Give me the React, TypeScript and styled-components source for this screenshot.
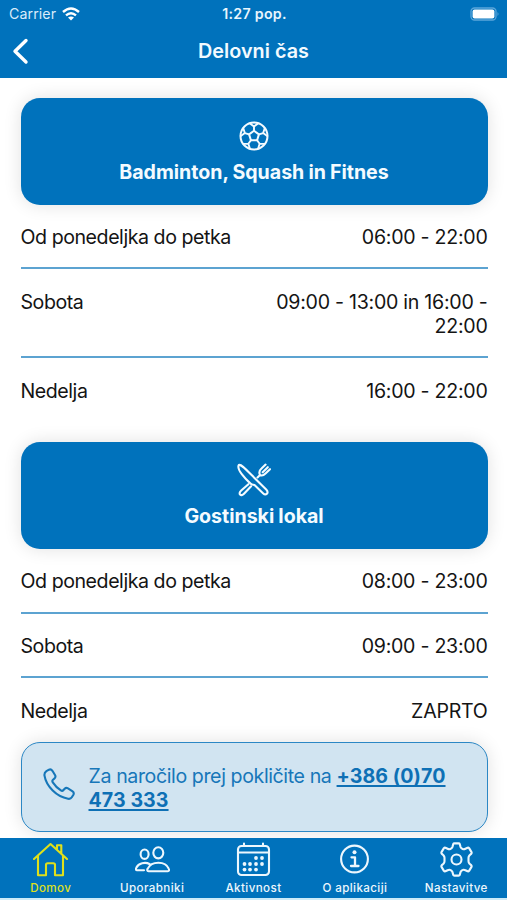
import React from "react";
import styled, { createGlobalStyle } from "styled-components";

const BLUE = "#0072bc";

const Global = createGlobalStyle`
  * { box-sizing: border-box; }
  body { margin: 0; background: #fff; font-family: Inter, "Liberation Sans", sans-serif; }
`;

const Screen = styled.div`
  width: 507px;
  height: 900px;
  overflow: hidden;
  display: flex;
  flex-direction: column;
  background: #fff;
  border-bottom: 2px solid #cdebf8;
`;

const Header = styled.header`
  flex: none;
  height: 77.5px;
  background: ${BLUE};
  color: #fff;
`;

const StatusBar = styled.div`
  height: 27px;
  padding: 0 7px 0 9px;
  display: grid;
  grid-template-columns: 1fr auto 1fr;
  align-items: center;
`;

const Carrier = styled.div`
  display: flex;
  align-items: center;
  gap: 6px;
  font-size: 14.2px;
  letter-spacing: 0.08px;
  color: #d9ecfa;
`;

const Clock = styled.div`
  font-size: 14.2px;
  font-weight: 600;
  letter-spacing: 0.3px;
  color: #e9f5fd;
`;

const Battery = styled.svg`
  justify-self: end;
`;

const TitleBar = styled.div`
  height: 48px;
  padding: 0 12px;
  display: grid;
  grid-template-columns: 1fr auto 1fr;
  align-items: center;
`;

const Title = styled.h1`
  margin: 0;
  font-size: 19.8px;
  font-weight: 600;
  letter-spacing: 0.02px;
  color: #f2faff;
`;

const Content = styled.main`
  flex: none;
  height: 760px;
  padding: 20px 19.5px 0 20.5px;
`;

const Section = styled.section`
  margin-bottom: 20.9px;

  &:last-of-type { margin-bottom: 0; }
`;

const Card = styled.div`
  height: 107px;
  padding-top: 21.5px;
  border-radius: 19px;
  background: ${BLUE};
  color: #f4fbff;
  box-shadow: 0 0 18px rgba(0, 0, 0, 0.12);
  display: flex;
  flex-direction: column;
  align-items: center;
`;

const CardTitle = styled.h2`
  margin: 7px 0 0;
  font-size: 19.6px;
  line-height: 24px;
  font-weight: 700;
  letter-spacing: -0.02px;
  word-spacing: -0.5px;
`;

const Row = styled.div`
  display: flex;
  justify-content: space-between;
  padding: 20.5px 0 17.7px;
  border-bottom: 2px solid #5ca3d1;
  font-size: 19.6px;
  line-height: 24.5px;
  color: #141414;

  &:last-child { border-bottom: 0; }
`;

const Day = styled.span`
  letter-spacing: -0.45px;
`;

const Hours = styled.span`
  width: 230px;
  text-align: right;
  letter-spacing: -0.27px;
`;

const Notice = styled.aside`
  height: 90.5px;
  margin-top: 0.9px;
  padding: 2px 0 0 21px;
  border: 1.5px solid #2b87c5;
  border-radius: 19px;
  background: #d1e4f1;
  color: #1777b9;
  box-shadow: 0 0 18px rgba(0, 0, 0, 0.12);
  display: flex;
  align-items: center;
  gap: 13px;
  font-size: 19.6px;
  line-height: 24.5px;
  letter-spacing: -0.4px;
`;

const NoticeText = styled.p`
  margin: 0;
  width: 370px;
`;

const Phone = styled.a`
  color: #0e70b5;
  font-weight: 700;
  letter-spacing: 0.07px;
  text-decoration: underline;
  text-decoration-thickness: 1.5px;
  text-underline-offset: 2px;
  text-decoration-skip-ink: none;
`;

const TabBar = styled.nav`
  flex: 1;
  display: grid;
  grid-template-columns: repeat(5, 1fr);
  background: ${BLUE};
`;

const Tab = styled.div<{ $active?: boolean }>`
  padding-top: 4px;
  display: flex;
  flex-direction: column;
  align-items: center;
  font-size: 11.6px;
  line-height: 16px;
  font-weight: 500;
  letter-spacing: 0.4px;
  color: ${(p) => (p.$active ? "#dfe01b" : "#edf7fd")};
`;

const TabLabel = styled.span`
  margin-top: 3px;
  white-space: nowrap;
`;

const Line = styled.svg`
  display: block;
  flex: none;
  fill: none;
  stroke: currentColor;
  stroke-width: 2.1;
  stroke-linecap: round;
  stroke-linejoin: round;
`;

const CallIcon = styled(Line)`
  margin-bottom: 7px;
`;

const Wifi = () => (
  <svg width="18" height="14" viewBox="0 0 18 14" fill="none" stroke="#fff" strokeWidth="2.4">
    <path d="M1 5Q9 -2 17 5" />
    <path d="M4 8.4Q9 4 14 8.4" />
    <path d="M9 13.5 6 10.6Q9 8.2 12 10.6Z" fill="#fff" stroke="none" />
  </svg>
);

const Ball = () => (
  <Line width="34" height="34" viewBox="-17 -17 34 34">
    <circle r="13.5" strokeWidth="2" />
    <path d="M0-5.2 4.9-1.6 3.1 4.2H-3.1L-4.9-1.6Z" strokeWidth="2" />
    {[0, 72, 144, 216, 288].map((angle) => (
      <path key={angle} d="M0-5.2V-9.6M-4-12.6 0-9.6 4-12.6" transform={`rotate(${angle})`} strokeWidth="1.9" />
    ))}
  </Line>
);

const Cutlery = () => (
  <Line width="34" height="34" viewBox="0 0 34 34">
    <path d="M1.8 2C4 1 7.2 4.5 17 14.5L29.2 26.4C32.3 30 29 33 26 30.2L18 22.4C16.7 21.1 15.6 22.6 13.8 20.8C7.5 14.8-.8 6.2 1.8 2Z" />
    <path d="M11.4 21.2 4.2 27.5C.5 30.8 4 34 7 30.8L14.1 23.3" />
    <path d="M20.5 14.4 23 12C21.5 9 22.8 7 24.5 5.5L28.6 1.6M25.7 9.2 30.8 4.2M33 6.2 28.5 10.6C26.8 12.2 24.8 13 23 12" />
  </Line>
);

const Call = () => (
  <CallIcon width="33" height="33" viewBox="0 0 33 33">
    <path d="M3.4 3.2 6 1.7Q8 .8 9.4 2.8L12 7Q13.2 9 11.3 10.6L10 11.7Q8.8 12.8 9.8 14.3Q12.8 19 17.9 22.4Q19.3 23.4 20.5 22L21.7 20.7Q23.1 19.2 25 20.4L29.6 23.4Q31.4 24.7 30.4 26.7L28.8 29.3Q27.6 31.3 25 30.8Q16.4 29.3 9.7 22.6Q2.8 15.7 1.5 7.7Q1 4.9 3.4 3.2Z" />
  </CallIcon>
);

const Home = () => (
  <Line width="35" height="35" viewBox="0 0 35 35">
    <path d="M1 17 17.5 2 34 17M5 14V33.2H13V23Q13 21.3 14.7 21.3H20.3Q22 21.3 22 23V33.2H30V14M24 7.8V3.2H28.3V11.4" />
  </Line>
);

const People = () => (
  <Line width="35" height="35" viewBox="0 0 35 35">
    <ellipse cx="23.3" cy="10.8" rx="5" ry="5.6" />
    <ellipse cx="9.6" cy="12.2" rx="4" ry="4.7" />
    <path d="M13.5 29.2C12 29.2 12 27.8 12.7 26.6C16.5 18.8 30.5 18.8 33.7 26.6C34.4 28 34.2 29.2 32.8 29.2ZM9 28.2H2C.7 28.2.7 26.8 1.3 25.8C3.5 21 10.3 19.8 14.5 22" />
  </Line>
);

const Calendar = () => (
  <Line width="35" height="35" viewBox="0 0 35 35">
    <rect x="2" y="4" width="31" height="29" rx="3.5" />
    <path d="M2 10.5H33M8 1.5V4M27 1.5V4" />
    {[[20, 16], [26, 16], [8.5, 22], [14, 22], [20, 22], [26, 22], [8.5, 27.6], [14, 27.6], [20, 27.6]].map(([x, y]) => (
      <circle key={`${x}-${y}`} cx={x} cy={y} r="1.9" fill="currentColor" stroke="none" />
    ))}
  </Line>
);

const Info = () => (
  <Line width="35" height="35" viewBox="0 0 35 35">
    <circle cx="17.5" cy="17" r="13.4" />
    <path d="M14.5 15.3H18V23.8M14 24H21.5" strokeWidth="2.3" />
    <circle cx="17.5" cy="10.3" r="2" fill="currentColor" stroke="none" />
  </Line>
);

const Gear = () => (
  <Line width="35" height="35" viewBox="0 0 35 35">
    <circle cx="17.5" cy="17.5" r="5" />
    <path d="M14.2 2.2Q14.5 1.4 15.4 1.4H19.6Q20.5 1.4 20.8 2.2L21.6 5.1Q22.2 6.5 23.7 7Q25 7.5 26.4 6.8L28.6 5.7Q29.5 5.4 30.1 6.1L32.5 10.1Q33 11 32.4 11.6L30.6 13.2Q29.5 14.4 29.5 15.7V19.3Q29.5 20.6 30.6 21.8L32.4 23.4Q33 24 32.5 24.9L30.1 28.9Q29.5 29.6 28.6 29.3L26.4 28.2Q25 27.5 23.7 28Q22.2 28.5 21.6 29.9L20.8 32.8Q20.5 33.6 19.6 33.6H15.4Q14.5 33.6 14.2 32.8L13.4 29.9Q12.8 28.5 11.3 28Q10 27.5 8.6 28.2L6.4 29.3Q5.5 29.6 4.9 28.9L2.5 24.9Q2 24 2.6 23.4L4.4 21.8Q5.5 20.6 5.5 19.3V15.7Q5.5 14.4 4.4 13.2L2.6 11.6Q2 11 2.5 10.1L4.9 6.1Q5.5 5.4 6.4 5.7L8.6 6.8Q10 7.5 11.3 7Q12.8 6.5 13.4 5.1Z" />
  </Line>
);

const sections = [
  {
    title: "Badminton, Squash in Fitnes",
    icon: <Ball />,
    rows: [
      ["Od ponedeljka do petka", "06:00 - 22:00"],
      ["Sobota", "09:00 - 13:00 in 16:00 - 22:00"],
      ["Nedelja", "16:00 - 22:00"],
    ],
  },
  {
    title: "Gostinski lokal",
    icon: <Cutlery />,
    rows: [
      ["Od ponedeljka do petka", "08:00 - 23:00"],
      ["Sobota", "09:00 - 23:00"],
      ["Nedelja", "ZAPRTO"],
    ],
  },
];

const tabs = [
  { label: "Domov", icon: <Home /> },
  { label: "Uporabniki", icon: <People /> },
  { label: "Aktivnost", icon: <Calendar /> },
  { label: "O aplikaciji", icon: <Info /> },
  { label: "Nastavitve", icon: <Gear /> },
];

export default function App() {
  return (
    <Screen>
      <Global />
      <Header>
        <StatusBar>
          <Carrier>
            Carrier <Wifi />
          </Carrier>
          <Clock>1:27 pop.</Clock>
          <Battery width="30" height="14" viewBox="0 0 30 14">
            <rect x="1" y="1" width="25" height="12" rx="3.5" fill="none" stroke="#5ba6da" strokeWidth="1.3" />
            <rect x="2.6" y="2.6" width="21.8" height="8.8" rx="2" fill="#fff" />
            <path d="M27.5 5Q29.5 7 27.5 9Z" fill="#5ba6da" />
          </Battery>
        </StatusBar>
        <TitleBar>
          <Line width="17" height="27" viewBox="0 0 17 27">
            <path d="M14 2.5 3 13.3 14 24" strokeWidth="3.4" />
          </Line>
          <Title>Delovni čas</Title>
        </TitleBar>
      </Header>
      <Content>
        {sections.map((section) => (
          <Section key={section.title}>
            <Card>
              {section.icon}
              <CardTitle>{section.title}</CardTitle>
            </Card>
            {section.rows.map(([day, hours]) => (
              <Row key={day}>
                <Day>{day}</Day>
                <Hours>{hours}</Hours>
              </Row>
            ))}
          </Section>
        ))}
        <Notice>
          <Call />
          <NoticeText>
            Za naročilo prej pokličite na <Phone>+386 (0)70 473 333</Phone>
          </NoticeText>
        </Notice>
      </Content>
      <TabBar>
        {tabs.map((tab, index) => (
          <Tab key={tab.label} $active={index === 0}>
            {tab.icon}
            <TabLabel>{tab.label}</TabLabel>
          </Tab>
        ))}
      </TabBar>
    </Screen>
  );
}
